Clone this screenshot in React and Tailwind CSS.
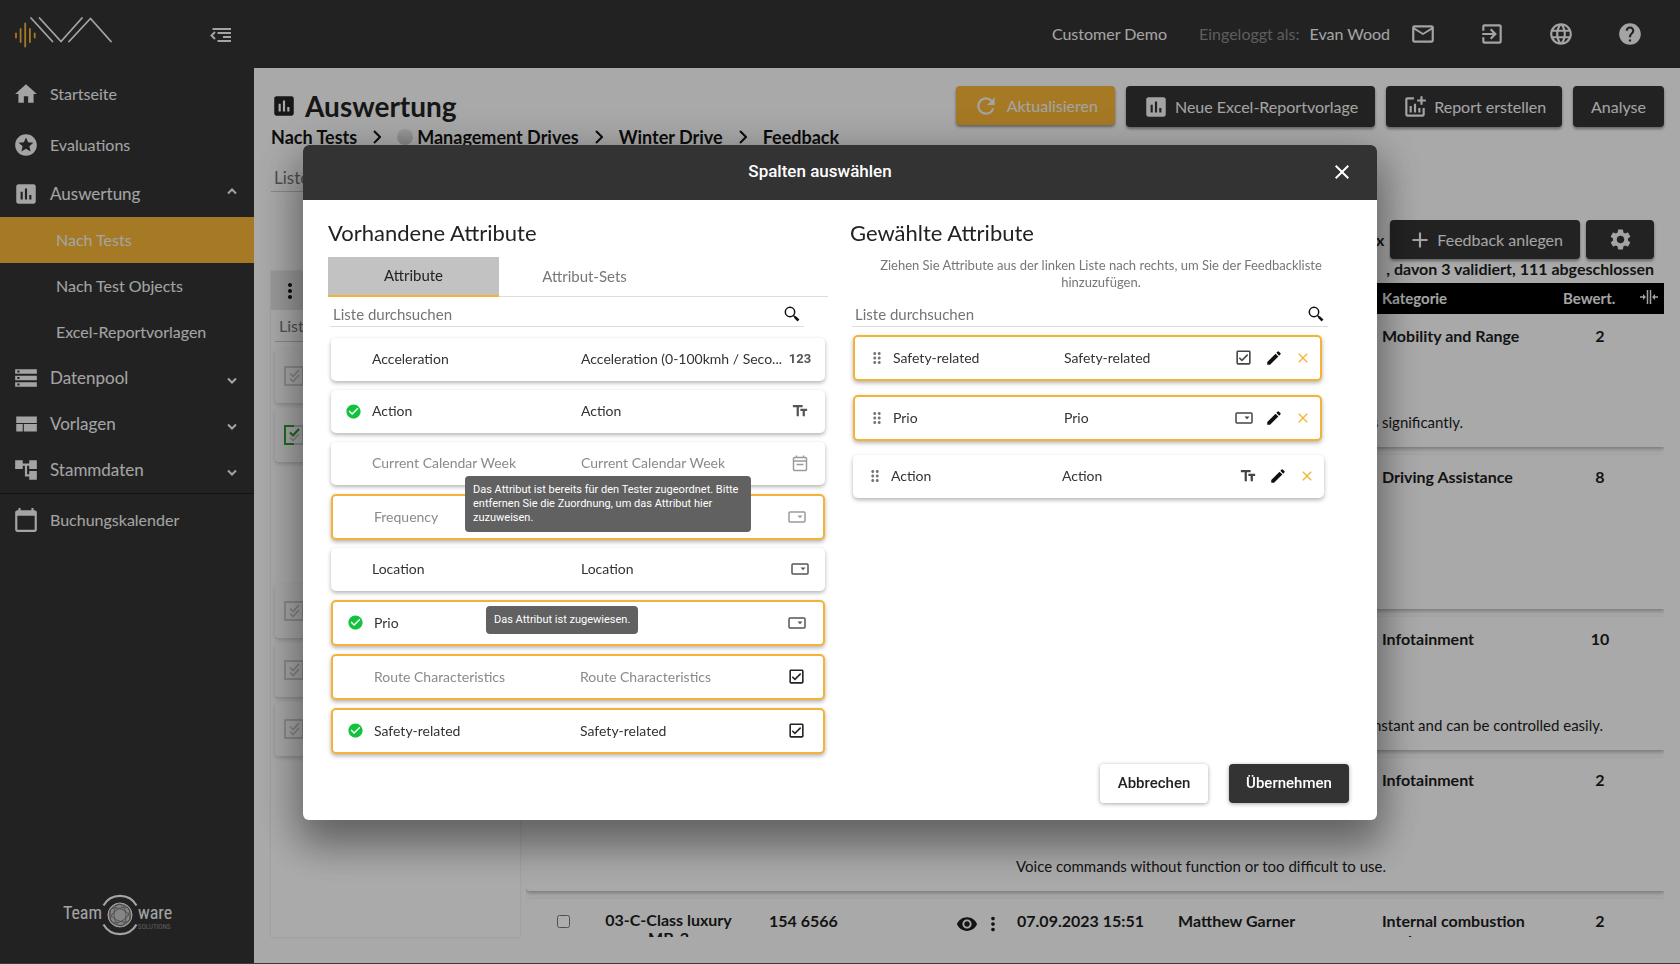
import React from "react";
import {
  MdHome, MdStars, MdAssessment, MdStorage, MdAccountTree, MdCalendarToday,
  MdMailOutline, MdExitToApp, MdLanguage, MdHelp, MdRefresh, MdAddchart, MdAdd,
  MdSettings, MdVisibility, MdMoreVert, MdCheckCircle, MdTextFields,
  MdOutlineCheckBox, MdEdit, MdClose, MdDragIndicator,
} from "react-icons/md";

function BrandLogo() {
  return (
    <svg width="100" height="34" viewBox="14 17 100 34" fill="none" aria-label="IVA" className="block">
      <g stroke="#f5b335" strokeWidth="1.8" strokeLinecap="round">
        <path d="M16 34.5v4M20.6 30v13M25.2 24.500v23M29.900 30v13M34.700 34.500v4" />
      </g>
      <g stroke="#f2f2f2" strokeWidth="1.8" strokeLinecap="round" strokeLinejoin="round">
        <path d="M31 19l21.500 23.500M39.500 19l21.500 23.500L82 19M69 42.500L90.500 19.500l20.500 23" />
      </g>
    </svg>
  );
}

function CollapseIcon() {
  return (
    <svg width="22" height="16" viewBox="0 0 22 16" fill="none" stroke="currentColor" strokeWidth="2" className="mt-1">
      <path d="M2.500 2H21M7.500 6H21M13 10H21M7.500 14H21" strokeWidth="1.800" />
      <path d="M5 5L1.500 8.500L5 12" />
    </svg>
  );
}

function TemplateIcon() {
  return (
    <svg width="26" height="26" viewBox="0 0 24 24" fill="currentColor">
      <path d="M3 19h6v-7H3v7zm7 0h12v-7H10v7zM3 5v6h19V5H3z" />
    </svg>
  );
}

function Caret({ up }) {
  return (
    <svg width="10" height="8" viewBox="0 0 10 8" fill="none" stroke="currentColor" strokeWidth="2" className={up ? "mb-1.5" : "mt-1.5"}>
      <path d={up ? "M1 6.500L5 2.500l4 4" : "M1 1.500l4 4 4-4"} />
    </svg>
  );
}

function SearchIcon() {
  return (
    <svg width="16" height="16" viewBox="0 0 16 16" fill="none" stroke="#111">
      <circle cx="6" cy="6" r="4.700" strokeWidth="1.500" />
      <path d="M9.500 9.500l1.500 1.500" strokeWidth="1.500" />
      <path d="M10.800 10.800l3.700 3.700" strokeWidth="2.600" />
    </svg>
  );
}

function SelectIcon() {
  return (
    <svg width="18" height="12" viewBox="0 0 18 12" fill="none">
      <rect x="1" y="1" width="16" height="10" rx="1" stroke="currentColor" strokeWidth="1.500" />
      <path d="M9.500 4.500h5L12 7.300z" fill="currentColor" />
    </svg>
  );
}

function DateIcon() {
  return (
    <svg width="16" height="17" viewBox="0 0 16 17" fill="none" stroke="currentColor" strokeWidth="1.500">
      <rect x="1.500" y="2.500" width="13" height="13" rx="1" />
      <path d="M1.500 6h13M4.500 9.500h7M4.500 0.500v2M11.500 0.500v2" />
    </svg>
  );
}

function ChecklistIcon({ active }) {
  return (
    <svg width="20" height="20" viewBox="0 0 20 20" fill="none" stroke="#c4c4c4" strokeWidth="1.600" className="block">
      <rect x="1" y="1" width="18" height="18" />
      <path d="M6 12.500l3 3 6-6.500" />
      <path d="M6 7.500l3 3 6-6.500" stroke={active ? "#2f9e36" : "#c4c4c4"} strokeWidth={active ? 2.2 : 1.6} />
      {active && <path d="M10 1H1v18h9" stroke="#2f9e36" strokeWidth="2" />}
    </svg>
  );
}

function CollapseColumnsIcon() {
  return (
    <svg width="18" height="14" viewBox="0 0 18 14" fill="none" stroke="#f2f2f2" strokeWidth="1.500">
      <path d="M7.500 0v14M10.500 0v14M0 7h5M18 7h-5" />
      <path d="M3 4L6 7L3 10zM15 4L12 7L15 10z" fill="#f2f2f2" stroke="none" />
    </svg>
  );
}

function TeamwareLogo() {
  return (
    <div className="flex items-center justify-center text-[#f2f2f2] font-['Liberation_Sans_Narrow','Roboto_Condensed',Roboto,sans-serif]">
      <span className="pb-1 text-lg leading-5">Team</span>
      <svg width="36" height="42" viewBox="0 0 36 42" fill="none" stroke="currentColor" className="block">
        <path d="M1.500 11.500a19 19 0 0 1 33 0M1.500 30.500a19 19 0 0 0 33 0" strokeWidth="2.200" />
        <circle cx="18" cy="21" r="12" fill="#c4c4c4" strokeWidth="1" />
        <g stroke="#6a6a6a" strokeWidth="0.800">
          <ellipse cx="18" cy="21" rx="11" ry="6" transform="rotate(25 18 21)" />
          <ellipse cx="18" cy="21" rx="11" ry="6" transform="rotate(85 18 21)" />
          <ellipse cx="18" cy="21" rx="11" ry="6" transform="rotate(145 18 21)" />
          <circle cx="18" cy="21" r="10.500" />
        </g>
      </svg>
      <span className="flex flex-col pt-1">
        <span className="text-lg leading-5">ware</span>
        <span className="text-[7px] leading-2 text-[#8a8a8a]">SOLUTIONS</span>
      </span>
    </div>
  );
}

function NavItem({ icon, label, caret, tall }) {
  return (
    <a href="#" className={`flex items-center pl-[13px] pr-[17px] ${tall ? "h-[51px] text-base" : "h-[46px] text-[17px]"}`}>
      <span className="flex w-[37px] items-center">{icon}</span>
      <span className="flex-1">{label}</span>
      {caret && <Caret up={caret === "up"} />}
    </a>
  );
}

function SubItem({ label, active }) {
  return (
    <a href="#" className={`flex h-[46px] items-center pl-14 text-base ${active ? "bg-[#f5b335]" : ""}`}>
      {label}
    </a>
  );
}

function Sidebar() {
  return (
    <aside className="flex w-[254px] shrink-0 flex-col bg-[#333] text-[#f2f2f2]">
      <div className="flex h-[68px] items-center justify-between pb-0.5 pl-3.5 pr-[22px]">
        <BrandLogo />
        <button type="button" aria-label="Menü einklappen"><CollapseIcon /></button>
      </div>
      <nav className="flex flex-col">
        <NavItem tall icon={<MdHome size={26} />} label="Startseite" />
        <NavItem tall icon={<MdStars size={26} />} label="Evaluations" />
        <div className="border-b border-[#1c1c1c] pt-px">
          <NavItem icon={<MdAssessment size={26} />} label="Auswertung" caret="up" />
          <SubItem label="Nach Tests" active />
          <SubItem label="Nach Test Objects" />
          <SubItem label="Excel-Reportvorlagen" />
          <NavItem icon={<MdStorage size={26} />} label="Datenpool" caret="down" />
          <NavItem icon={<TemplateIcon />} label="Vorlagen" caret="down" />
          <NavItem icon={<MdAccountTree size={26} />} label="Stammdaten" caret="down" />
        </div>
        <NavItem tall icon={<MdCalendarToday size={26} />} label="Buchungskalender" />
      </nav>
      <div className="mt-auto pb-[27px] pr-[19px]">
        <TeamwareLogo />
      </div>
    </aside>
  );
}

function TopBar() {
  return (
    <header className="flex h-[68px] shrink-0 items-center justify-end bg-[#333] pr-[37px] text-base text-[#f2f2f2]">
      <span className="mr-8">Customer Demo</span>
      <span className="mr-2.5 text-[#8a8a8a]">Eingeloggt als:</span>
      <span className="mr-5">Evan Wood</span>
      <div className="flex gap-[43px]">
        <button type="button" aria-label="Nachrichten"><MdMailOutline size={26} /></button>
        <button type="button" aria-label="Abmelden"><MdExitToApp size={26} /></button>
        <button type="button" aria-label="Sprache"><MdLanguage size={26} /></button>
        <button type="button" aria-label="Hilfe"><MdHelp size={26} /></button>
      </div>
    </header>
  );
}

const darkButton =
  "flex items-center rounded bg-[#333] text-base text-[#f2f2f2] shadow-[0_2px_3px_rgba(0,0,0,0.4)]";

function Chevron() {
  return (
    <svg width="8" height="14" viewBox="0 0 8 14" fill="none" stroke="#111" strokeWidth="2">
      <path d="M1 1l6 6-6 6" />
    </svg>
  );
}

function PageHead() {
  return (
    <div className="flex items-start justify-between">
      <div className="flex flex-col">
        <h1 className="flex h-[39px] items-center gap-2 text-[28px] font-bold text-[#222]">
          <MdAssessment size={26} />
          Auswertung
        </h1>
        <nav className="flex h-6 items-center gap-4 whitespace-nowrap text-lg font-bold text-[#111]">
          <a href="#">Nach Tests</a>
          <Chevron />
          <a href="#" className="flex items-center gap-1">
            <span className="h-4 w-4 rounded-full bg-linear-to-b from-[#e4e4e4] to-[#c4c4c4]" />
            Management Drives
          </a>
          <Chevron />
          <a href="#">Winter Drive</a>
          <Chevron />
          <a href="#">Feedback</a>
        </nav>
      </div>
      <div className="flex items-start gap-[11px]">
        <button type="button" className="flex h-[39px] items-center gap-2 rounded bg-[#f5b335] px-[17px] text-base text-[#f2f2f2] shadow-[0_2px_3px_rgba(0,0,0,0.4)]">
          <MdRefresh size={26} />
          Aktualisieren
        </button>
        <button type="button" className={`${darkButton} h-[41px] gap-1.5 px-[17px]`}>
          <MdAssessment size={26} />
          Neue Excel-Reportvorlage
        </button>
        <button type="button" className={`${darkButton} h-[41px] gap-1.5 px-4`}>
          <MdAddchart size={26} />
          Report erstellen
        </button>
        <button type="button" className={`${darkButton} h-[41px] px-[18px]`}>Analyse</button>
      </div>
    </div>
  );
}

function TestCard({ active, className = "" }) {
  return (
    <li className={`flex h-[54px] items-center rounded bg-[#f9f9f9] pl-[9px] shadow-[0_2px_4px_rgba(0,0,0,0.18)] ${className}`}>
      <ChecklistIcon active={active} />
    </li>
  );
}

function TestPanel() {
  return (
    <section className="flex w-[249px] shrink-0 flex-col pt-[79px]">
      <div className="flex flex-1 flex-col bg-[#fbfbfb] shadow-[0_0_2px_rgba(0,0,0,0.15)]">
        <div className="flex h-[39px] items-center bg-[#e2e2e2] pl-[7px]">
          <button type="button" aria-label="Optionen"><MdMoreVert size={24} color="#111" /></button>
        </div>
        <div className="mx-1 flex h-8 items-center border-b border-[#c8c8c8]">
          <input aria-label="Tests durchsuchen" placeholder="Liste durchsuchen" className="w-full bg-transparent px-1 text-base placeholder:text-[#757575]" />
        </div>
        <ul className="mx-1 mt-[7px] flex flex-col gap-[5px]">
          <TestCard />
          <TestCard active />
          <TestCard className="mt-[117px]" />
          <TestCard />
          <TestCard />
        </ul>
      </div>
    </section>
  );
}

const records = [
  { height: "h-[133px]", category: "Mobility and Range", rating: "2", comment: "Low temperature reduces significantly.", align: "text-right pr-[201px]" },
  { height: "h-[154px]", category: "Driving Assistance", rating: "8" },
  { height: "h-[133px]", category: "Infotainment", rating: "10", comment: "The volume is constant and can be controlled easily.", align: "text-right pr-[61px]" },
  { height: "h-[133px]", category: "Infotainment", rating: "2", comment: "Voice commands without function or too difficult to use.", align: "pl-[490px]" },
  {
    height: "h-[133px]", category: "Internal combustion engine", rating: "2",
    object: "03-C-Class luxury MB-2", number: "154 6566", date: "07.09.2023 15:51", tester: "Matthew Garner",
  },
];

const columns = "grid grid-cols-[74px_137px_213px_67px_161px_204px_1fr_80px_24px]";

function FeedbackTable() {
  return (
    <table className="block w-full text-base text-[#1c1c1c]">
      <thead className="block bg-black text-[15px] text-[#f2f2f2]">
        <tr className={`${columns} h-[31px] items-center text-left`}>
          <th /><th /><th /><th /><th /><th />
          <th>Kategorie</th>
          <th className="whitespace-nowrap pl-[3px]">Bewert.</th>
          <th className="flex pb-1"><CollapseColumnsIcon /></th>
        </tr>
      </thead>
      {records.map((r, i) => (
        <tbody key={i} className={`${r.height} mt-2 block rounded-l bg-[#fafafa] shadow-[0_2px_4px_rgba(0,0,0,0.3)] first-of-type:mt-0`}>
          <tr className={`${columns} h-[92px] items-start pt-3 font-bold leading-5`}>
            <td className="flex justify-center pt-1">
              <input type="checkbox" aria-label="Feedback auswählen" className="h-[13px] w-[13px]" />
            </td>
            <td className="text-center leading-[18px]">{r.object}</td>
            <td className="pl-8">{r.number}</td>
            <td>
              {r.object && (
                <span className="flex items-center gap-1 pl-1.5 pt-0.5">
                  <button type="button" aria-label="Anzeigen"><MdVisibility size={22} /></button>
                  <button type="button" aria-label="Mehr"><MdMoreVert size={22} /></button>
                </span>
              )}
            </td>
            <td>{r.date}</td>
            <td>{r.tester}</td>
            <td className="pr-4">{r.category}</td>
            <td className="text-center">{r.rating}</td>
            <td />
          </tr>
          {r.comment && (
            <tr className="block text-[15px]">
              <td className={`block leading-8 ${r.align}`}>{r.comment}</td>
            </tr>
          )}
        </tbody>
      ))}
    </table>
  );
}

function FeedbackSection() {
  return (
    <section className="flex min-w-0 flex-1 flex-col pl-1.5 pt-7">
      <div className="flex items-center justify-end gap-1.5 pr-2.5">
        <span className="text-base font-bold text-[#1c1c1c]">x</span>
        <button type="button" className={`${darkButton} h-[39px] gap-1 px-[17px]`}>
          <MdAdd size={26} />
          Feedback anlegen
        </button>
        <button type="button" aria-label="Einstellungen" className={`${darkButton} h-[39px] w-[68px] justify-center`}>
          <MdSettings size={25} />
        </button>
      </div>
      <p className="flex h-6 justify-end gap-3 pr-2.5 text-base font-bold leading-5 text-[#1c1c1c]">
        <span>214 Feedbacks</span>
        <span>, davon 3 validiert, 111 abgeschlossen</span>
      </p>
      <div className="min-h-0 flex-1 overflow-hidden">
        <FeedbackTable />
      </div>
    </section>
  );
}

const typeIcons = {
  number: <span className="text-[13px] font-bold font-[Roboto,sans-serif]">123</span>,
  text: <MdTextFields size={18} />,
  date: <DateIcon />,
  select: <SelectIcon />,
  check: <MdOutlineCheckBox size={19} />,
};

const available = [
  { name: "Acceleration", label: "Acceleration (0-100kmh / Seco...", type: "number" },
  { name: "Action", type: "text", assigned: true },
  { name: "Current Calendar Week", type: "date", muted: true },
  { name: "Frequency", type: "select", muted: true, outlined: true },
  { name: "Location", type: "select" },
  { name: "Prio", type: "select", assigned: true, outlined: true },
  { name: "Route Characteristics", type: "check", muted: true, outlined: true },
  { name: "Safety-related", type: "check", assigned: true, outlined: true },
];

const tips = {
  "Current Calendar Week": { text: "Das Attribut ist bereits für den Tester zugeordnet. Bitte entfernen Sie die Zuordnung, um das Attribut hier zuzuweisen.", place: "left-[134px] top-[34px] w-[286px]" },
  Prio: { text: "Das Attribut ist zugewiesen.", place: "left-[153px] top-[4px] whitespace-nowrap" },
};

const cardBase = "relative flex items-center rounded-[5px] bg-white text-sm";
const plainCard = "h-[43px] shadow-[0_2px_4px_rgba(0,0,0,0.3)]";
const outlinedCard = "h-[46px] border-2 border-[#f5b335] shadow-[0_2px_4px_rgba(0,0,0,0.3)]";

function AvailableCard({ item }) {
  const tip = tips[item.name];
  return (
    <li className={`${cardBase} ${item.outlined ? `${outlinedCard} mb-2 pr-1` : `${plainCard} mb-[9px]`} ${item.muted ? "text-[#8a8a8a]" : "text-[#333]"}`}>
      <span className="flex w-[41px] pl-3.5">
        {item.assigned && <MdCheckCircle size={17} color="#12c23c" />}
      </span>
      <span className={item.outlined ? "w-[206px]" : "w-[209px]"}>{item.name}</span>
      <span className="w-[194px] whitespace-nowrap">{item.label || item.name}</span>
      <span className={`flex flex-1 justify-center ${item.type === "check" ? "text-[#222]" : item.muted ? "text-[#9a9a9a]" : "text-[#555]"}`}>
        {typeIcons[item.type]}
      </span>
      {tip && (
        <span role="tooltip" className={`absolute z-10 rounded bg-[#616161] px-2 py-[7px] text-[11px] leading-[14px] text-white font-[Roboto,sans-serif] ${tip.place}`}>
          {tip.text}
        </span>
      )}
    </li>
  );
}

function SelectedCard({ name, type, outlined }) {
  return (
    <li className={`${cardBase} ${outlined ? `${outlinedCard} mr-0.5` : plainCard} pr-[9px] text-[#333]`}>
      <span className="flex w-[38px] justify-center pl-1.5 text-[#777]"><MdDragIndicator size={18} /></span>
      <span className="w-[171px]">{name}</span>
      <span className="flex-1">{name}</span>
      <span className="mr-3 flex text-[#444]">{typeIcons[type]}</span>
      <button type="button" aria-label={`${name} bearbeiten`} className="mr-3"><MdEdit size={18} color="#111" /></button>
      <button type="button" aria-label={`${name} entfernen`}><MdClose size={16} color="#f5b335" /></button>
    </li>
  );
}

function SearchField({ label }) {
  return (
    <div className="mr-6 ml-0.5 flex h-6 items-center border-b border-[#ddd] pb-px pl-[3px] pr-1">
      <input aria-label={label} placeholder="Liste durchsuchen" className="min-w-0 flex-1 text-[15px] leading-5 placeholder:text-[#757575]" />
      <button type="button" aria-label="Suchen"><SearchIcon /></button>
    </div>
  );
}

function ColumnDialog() {
  return (
    <div className="fixed inset-0 flex items-center justify-center bg-black/32">
      <div role="dialog" aria-labelledby="dialog-title" className="flex w-[1074px] flex-col overflow-hidden rounded-md bg-white shadow-[0_24px_38px_3px_rgba(0,0,0,0.3),0_9px_46px_8px_rgba(0,0,0,0.2)]">
        <div className="flex h-[55px] items-center gap-4 bg-[#333] px-[23px] text-white">
          <h2 id="dialog-title" className="flex-1 text-center text-[17px] font-medium font-[Roboto,sans-serif]">Spalten auswählen</h2>
          <button type="button" aria-label="Schließen"><MdClose size={24} /></button>
        </div>
        <div className="flex px-[25px] pt-[18px] text-[#222]">
          <section className="w-[500px]">
            <h3 className="h-[39px] text-[22px] leading-[30px]">Vorhandene Attribute</h3>
            <div role="tablist" className="flex h-10 border-b border-[#ddd] text-[15px]">
              <button type="button" role="tab" aria-selected="true" className="-mb-px h-10 w-[171px] border-b-2 border-[#f5b335] bg-[#c2c2c2] text-[#222]">Attribute</button>
              <button type="button" role="tab" aria-selected="false" className="w-[171px] text-[#777]">Attribut-Sets</button>
            </div>
            <div className="pt-1.5"><SearchField label="Vorhandene Attribute durchsuchen" /></div>
            <ul className="ml-[3px] mr-[3px] pt-[11px]">
              {available.map((item) => <AvailableCard key={item.name} item={item} />)}
            </ul>
          </section>
          <section className="ml-[22px] flex-1">
            <h3 className="h-[39px] text-[22px] leading-[30px]">Gewählte Attribute</h3>
            <p className="mx-auto flex h-[46px] w-[470px] items-start justify-center text-center text-[13px] leading-[17px] text-[#777]">
              Ziehen Sie Attribute aus der linken Liste nach rechts, um Sie der Feedbackliste hinzuzufügen.
            </p>
            <SearchField label="Gewählte Attribute durchsuchen" />
            <ul className="ml-[3px] mr-7 flex flex-col gap-3.5 pt-2">
              <SelectedCard name="Safety-related" type="check" outlined />
              <SelectedCard name="Prio" type="select" outlined />
              <SelectedCard name="Action" type="text" />
            </ul>
          </section>
        </div>
        <div className="flex justify-end gap-[21px] pb-[17px] pr-7 pt-0.5 text-[15px] font-medium font-[Roboto,sans-serif]">
          <button type="button" className="h-[39px] w-[108px] rounded bg-white text-[#222] shadow-[0_1px_4px_rgba(0,0,0,0.35)]">Abbrechen</button>
          <button type="button" className="h-[39px] w-[120px] rounded bg-[#333] text-white shadow-[0_1px_4px_rgba(0,0,0,0.35)]">Übernehmen</button>
        </div>
      </div>
    </div>
  );
}

export default function App() {
  return (
    <div className="flex h-screen overflow-hidden border-b border-[#555] bg-[#f9f9f9] font-[Lato,sans-serif]">
      <Sidebar />
      <div className="flex min-w-0 flex-1 flex-col">
        <TopBar />
        <main className="flex min-h-0 flex-1 flex-col pb-[26px] pl-[17px] pr-4 pt-[18px]">
          <PageHead />
          <div className="mt-4 flex h-[27px] w-[249px] shrink-0 items-center border-b border-[#c8c8c8]">
            <input aria-label="Liste durchsuchen" placeholder="Liste durchsuchen" className="w-full bg-transparent px-[3px] text-[17px] placeholder:text-[#757575]" />
          </div>
          <div className="flex min-h-0 flex-1">
            <TestPanel />
            <FeedbackSection />
          </div>
        </main>
      </div>
      <ColumnDialog />
    </div>
  );
}
